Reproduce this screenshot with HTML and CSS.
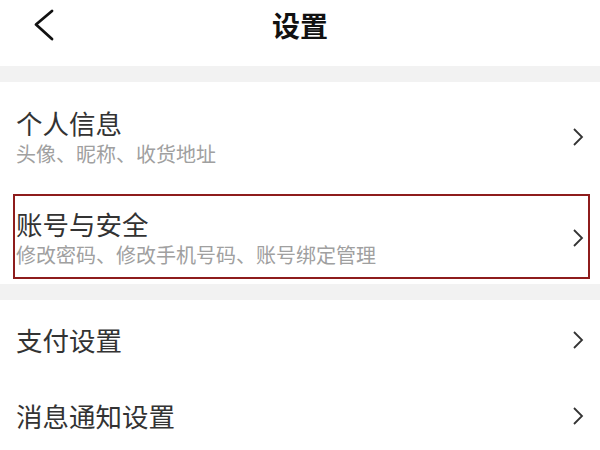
FILE: index.html
```html
<!DOCTYPE html>
<html lang="zh-CN">
<head>
<meta charset="utf-8">
<title>设置</title>
<link rel="stylesheet" href="styles.css">
</head>
<body>
<div class="page">
  <header class="topbar">
    <div class="back">
      <svg width="22" height="34" viewBox="0 0 22 34"><path d="M19 3 L3 16.5 L19 31" fill="none" stroke="#111" stroke-width="2.8" stroke-linecap="round" stroke-linejoin="round"/></svg>
    </div>
    <h1 class="title">设置</h1>
    <div class="spacer"></div>
  </header>
  <div class="gap"></div>
  <section class="group">
    <div class="item item-first">
      <div class="text">
        <div class="name">个人信息</div>
        <div class="desc">头像、昵称、收货地址</div>
      </div>
      <svg class="chev" width="12" height="20" viewBox="0 0 12 20"><path d="M2 2 L10 10 L2 18" fill="none" stroke="#333" stroke-width="1.8"/></svg>
    </div>
    <div class="item item-marked">
      <div class="mark">
        <div class="text">
          <div class="name">账号与安全</div>
          <div class="desc">修改密码、修改手机号码、账号绑定管理</div>
        </div>
        <svg class="chev" width="12" height="20" viewBox="0 0 12 20"><path d="M2 2 L10 10 L2 18" fill="none" stroke="#333" stroke-width="1.8"/></svg>
      </div>
    </div>
  </section>
  <div class="gap"></div>
  <section class="group">
    <div class="item item-plain">
      <div class="text"><div class="name">支付设置</div></div>
      <svg class="chev" width="12" height="20" viewBox="0 0 12 20"><path d="M2 2 L10 10 L2 18" fill="none" stroke="#333" stroke-width="1.8"/></svg>
    </div>
    <div class="item item-plain">
      <div class="text"><div class="name">消息通知设置</div></div>
      <svg class="chev" width="12" height="20" viewBox="0 0 12 20"><path d="M2 2 L10 10 L2 18" fill="none" stroke="#333" stroke-width="1.8"/></svg>
    </div>
  </section>
</div>
</body>
</html>
```

FILE: styles.css
```css
html, body {
  margin: 0;
  padding: 0;
  background: #fff;
}
body {
  font-family: "Noto Sans CJK SC", "Noto Sans", sans-serif;
  color: #333;
  width: 600px;
  height: 450px;
  overflow: hidden;
}
.page {
  display: flex;
  flex-direction: column;
}
.topbar {
  height: 50px;
  padding-bottom: 16px;
  display: grid;
  grid-template-columns: 1fr auto 1fr;
  align-items: center;
}
.back {
  padding-left: 33px;
  display: flex;
  align-items: center;
}
.back svg {
  display: block;
}
.title {
  margin: 0;
  font-size: 28px;
  line-height: 34px;
  font-weight: 700;
  color: #111;
}
.gap {
  height: 16px;
  background: #f2f2f2;
}
.group {
  display: flex;
  flex-direction: column;
}
.item {
  display: flex;
  align-items: center;
  justify-content: space-between;
}
.item-first {
  padding: 26px 16px 21px 16px;
}
.item-marked {
  padding: 7px 10px 5px 13px;
}
.mark {
  flex: 1;
  display: flex;
  align-items: center;
  justify-content: space-between;
  border: 2px solid #8e1c1c;
  padding: 13px 4px 10px 1px;
}
.item-plain {
  padding: 25px 16px 21px 16px;
}
.text {
  display: flex;
  flex-direction: column;
  gap: 4px;
}
.name {
  font-size: 26.5px;
  line-height: 30px;
  color: #333;
}
.desc {
  font-size: 20px;
  line-height: 24px;
  color: #a0a0a0;
}
.chev {
  display: block;
  flex: none;
}
```
